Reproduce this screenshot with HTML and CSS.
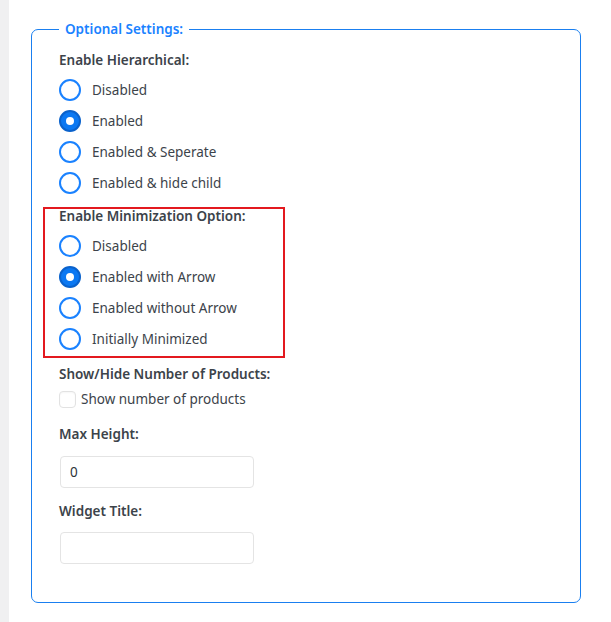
FILE: index.html
```html
<!DOCTYPE html>
<html lang="en">
<head>
<meta charset="utf-8">
<title>Optional Settings</title>
<link rel="stylesheet" href="styles.css">
</head>
<body>
<div class="page">
  <div class="strip"></div>
  <main class="main">
    <fieldset class="box">
      <legend class="legend">Optional Settings:</legend>

      <div class="group group-first">
        <div class="heading">Enable Hierarchical:</div>
        <label class="row"><input class="radio" type="radio" name="h"><span>Disabled</span></label>
        <label class="row"><input class="radio" type="radio" name="h" checked><span>Enabled</span></label>
        <label class="row"><input class="radio" type="radio" name="h"><span>Enabled &amp; Seperate</span></label>
        <label class="row"><input class="radio" type="radio" name="h"><span>Enabled &amp; hide child</span></label>
      </div>

      <div class="group group-marked">
        <div class="annot"></div>
        <div class="heading">Enable Minimization Option:</div>
        <label class="row"><input class="radio" type="radio" name="m"><span>Disabled</span></label>
        <label class="row"><input class="radio" type="radio" name="m" checked><span>Enabled with Arrow</span></label>
        <label class="row"><input class="radio" type="radio" name="m"><span>Enabled without Arrow</span></label>
        <label class="row"><input class="radio" type="radio" name="m"><span>Initially Minimized</span></label>
      </div>

      <div class="group group-count">
        <div class="heading">Show/Hide Number of Products:</div>
        <label class="check-row"><input class="check" type="checkbox"><span>Show number of products</span></label>
      </div>

      <div class="group group-field">
        <div class="heading">Max Height:</div>
        <input class="text" type="text" value="0">
      </div>

      <div class="group group-field2">
        <div class="heading">Widget Title:</div>
        <input class="text" type="text" value="">
      </div>
    </fieldset>
  </main>
</div>
</body>
</html>
```

FILE: styles.css
```css
html, body {
  margin: 0;
  padding: 0;
  background: #ffffff;
}

body {
  font-family: "Noto Sans", "Open Sans", Arial, sans-serif;
  font-size: 13.5px;
  color: #3c434a;
}

.page {
  display: flex;
  min-height: 622px;
}

.strip {
  width: 9px;
  flex: 0 0 9px;
  background: #f0f0f1;
}

.main {
  flex: 1;
  padding: 19px 30px 0 22px;
}

.box {
  margin: 0;
  width: 550px;
  box-sizing: border-box;
  border: 1px solid #1a7ff0;
  border-radius: 7px;
  padding: 0 27px 38px 27px;
}

.legend {
  padding: 0 6px;
  font-size: 13.5px;
  line-height: 20px;
  font-weight: 600;
  color: #1a82ff;
}

.group {
  position: relative;
  margin-top: 9px;
}

.group-first {
  margin-top: 11px;
}

.group-marked {
  margin-top: 8px;
}

.group-count {
  margin-top: 10px;
}

.heading {
  font-size: 13.5px;
  line-height: 20px;
  font-weight: 600;
  color: #3c434a;
  margin-bottom: 4px;
}

.row {
  display: flex;
  align-items: center;
  height: 31px;
  gap: 11px;
  cursor: pointer;
}

.row span {
  line-height: 20px;
}

.radio {
  appearance: none;
  -webkit-appearance: none;
  margin: 0;
  width: 22px;
  height: 22px;
  flex: 0 0 22px;
  box-sizing: border-box;
  border: 2px solid #1a82ff;
  border-radius: 50%;
  background: #ffffff;
  position: relative;
}

.radio:checked {
  background: #0b78f2;
  border-color: #0a62cc;
}

.radio:checked::after {
  content: "";
  position: absolute;
  left: 50%;
  top: 50%;
  width: 8px;
  height: 8px;
  margin: -4px 0 0 -4px;
  border-radius: 50%;
  background: #ffffff;
}

.annot {
  position: absolute;
  left: -16px;
  top: 1px;
  width: 242px;
  height: 151px;
  box-sizing: border-box;
  border: 2px solid #e3191f;
  pointer-events: none;
}

.check-row {
  display: flex;
  align-items: center;
  height: 22px;
  gap: 5px;
  margin-top: 4px;
}

.check {
  appearance: none;
  -webkit-appearance: none;
  margin: 0;
  width: 17px;
  height: 17px;
  flex: 0 0 17px;
  box-sizing: border-box;
  border: 1px solid #e2e2e2;
  border-radius: 4px;
  background: #ffffff;
  box-shadow: inset 0 1px 2px rgba(0, 0, 0, 0.04);
}

.group-field {
  margin-top: 14px;
}

.group-field .heading {
  margin-bottom: 12px;
}

.group-field2 {
  margin-top: 13px;
}

.group-field2 .heading {
  margin-bottom: 11px;
}

.text {
  display: block;
  margin: 0 0 0 1px;
  width: 194px;
  height: 32px;
  box-sizing: border-box;
  border: 1px solid #e4e4e4;
  border-radius: 4px;
  padding: 0 9px;
  font-family: inherit;
  font-size: 13.5px;
  color: #2c3338;
  background: #ffffff;
  outline: none;
}
```
